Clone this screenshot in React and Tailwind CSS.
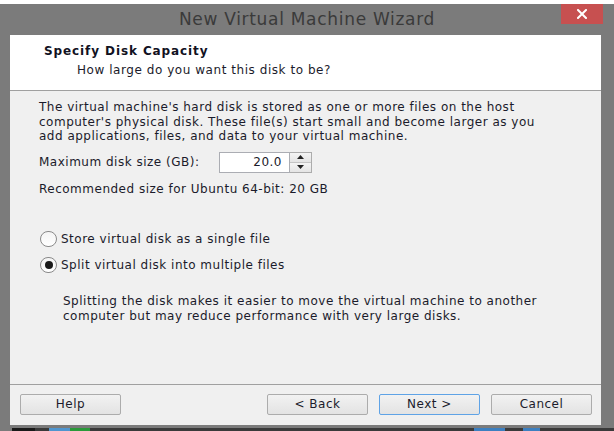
import React from 'react';

const font = { fontFamily: '"DejaVu Sans", "Open Sans", sans-serif' };

function Radio({ checked, label }) {
  return (
    <div className="flex items-center h-[16px]">
      <div className="w-[17px] h-[16px] rounded-full border border-[#8a8a8a] bg-gradient-to-b from-[#f4f4f4] to-white flex items-center justify-center flex-shrink-0">
        {checked && <div className="w-[8px] h-[8px] rounded-full bg-[#1a1a1a]" />}
      </div>
      <span className="ml-[4px] text-[12px] leading-[16px] tracking-[0.5px] text-[#1b1b2b]">{label}</span>
    </div>
  );
}

function WinButton({ children, focused }) {
  return (
    <button
      className={
        'w-[101px] h-[21px] rounded-[2px] border text-[12px] leading-[19px] tracking-[0.5px] text-[#1b1b2b] bg-gradient-to-b from-[#f2f2f2] to-[#e3e3e3] ' +
        (focused ? 'border-[#5fa3e6]' : 'border-[#acacac]')
      }
    >
      {children}
    </button>
  );
}

export default function App() {
  return (
    <div className="w-[614px] h-[431px] bg-white flex flex-col overflow-hidden select-none" style={font}>
      {/* bit of the page behind the window */}
      <div className="h-[4px] overflow-hidden bg-white">
        <div className="-mt-[25px] text-[30px] leading-[28px] font-bold text-[#1f4f9e]">ation 5</div>
      </div>

      <div className="flex-1 flex flex-col bg-[#7b7b7b]">
        {/* title bar */}
        <div className="h-[31px] grid grid-cols-[1fr_auto_1fr] items-start">
          <div />
          <div className="pt-[4px] text-[17px] leading-[22px] tracking-[0.7px] text-[#3a3a3a]">New Virtual Machine Wizard</div>
          <div className="flex justify-end pr-[11px]">
            <div className="w-[42px] h-[20px] bg-[#c75050] flex items-center justify-center">
              <svg width="10" height="10" viewBox="0 0 10 10">
                <path d="M1 1 L9 9 M9 1 L1 9" stroke="#ffffff" strokeWidth="2" strokeLinecap="square" />
              </svg>
            </div>
          </div>
        </div>

        {/* client area */}
        <div className="ml-[10px] mr-[13px] h-[390px] flex flex-col bg-[#f0f0f0]">
          <div className="h-[56px] bg-white border-b border-[#a0a0a0] flex flex-col">
            <div className="pl-[34px] pt-[8px] text-[12px] leading-[16px] tracking-[0.9px] font-bold text-[#111122]">Specify Disk Capacity</div>
            <div className="pl-[67px] pt-[3px] text-[12px] leading-[16px] tracking-[0.55px] text-[#1b1b2b]">How large do you want this disk to be?</div>
          </div>

          <div className="flex-1 flex flex-col pl-[29px] pt-[9px] text-[12px] tracking-[0.5px] text-[#1b1b2b]">
            <p className="leading-[14.5px]">
              The virtual machine's hard disk is stored as one or more files on the host
              <br />
              computer's physical disk. These file(s) start small and become larger as you
              <br />
              add applications, files, and data to your virtual machine.
            </p>

            <div className="mt-[8px] flex items-center h-[21px]">
              <span className="w-[180px] leading-[16px]">Maximum disk size (GB):</span>
              <div className="w-[71px] h-[21px] bg-white border border-[#abadb3] text-right pr-[7px] leading-[19px]">20.0</div>
              <div className="w-[22px] h-[21px] border border-l-0 border-[#acacac] flex flex-col">
                <div className="flex-1 bg-gradient-to-b from-[#f4f4f4] to-[#e4e4e4] border-b border-[#c4c4c4] flex items-center justify-center">
                  <svg width="7" height="4" viewBox="0 0 7 4"><path d="M0 4 L3.5 0 L7 4 Z" fill="#222" /></svg>
                </div>
                <div className="flex-1 bg-gradient-to-b from-[#f4f4f4] to-[#e4e4e4] flex items-center justify-center">
                  <svg width="7" height="4" viewBox="0 0 7 4"><path d="M0 0 L3.5 4 L7 0 Z" fill="#222" /></svg>
                </div>
              </div>
            </div>

            <p className="mt-[9px] leading-[14px]">Recommended size for Ubuntu 64-bit: 20 GB</p>

            <div className="mt-[35px] pl-[1px] flex flex-col gap-[10px]">
              <Radio label="Store virtual disk as a single file" />
              <Radio checked label="Split virtual disk into multiple files" />
            </div>

            <p className="mt-[21px] pl-[24px] leading-[15px]">
              Splitting the disk makes it easier to move the virtual machine to another
              <br />
              computer but may reduce performance with very large disks.
            </p>
          </div>

          <div className="h-[41px] border-t border-[#a0a0a0] flex items-start pt-[9px] pl-[10px] pr-[9px]">
            <WinButton>Help</WinButton>
            <div className="flex-1" />
            <div className="flex gap-[11px]">
              <WinButton>&lt; Back</WinButton>
              <WinButton focused>Next &gt;</WinButton>
              <WinButton>Cancel</WinButton>
            </div>
          </div>
        </div>

        <div className="h-[3px]" />
      </div>

      {/* desktop strip below the window */}
      <div className="h-[3px] flex bg-[#3a3a3a]">
        <div className="w-[12px] bg-[#7b7b7b]" />
        <div className="w-[23px] bg-[#1a1a1a]" />
        <div className="w-[14px]" />
        <div className="w-[21px] bg-[#4f95cf]" />
        <div className="w-[20px] bg-[#2a9a3a]" />
        <div className="w-[384px]" />
        <div className="w-[31px] bg-[#3c7fc0]" />
        <div className="w-[18px]" />
        <div className="w-[17px] bg-[#3c7fc0]" />
      </div>
    </div>
  );
}
